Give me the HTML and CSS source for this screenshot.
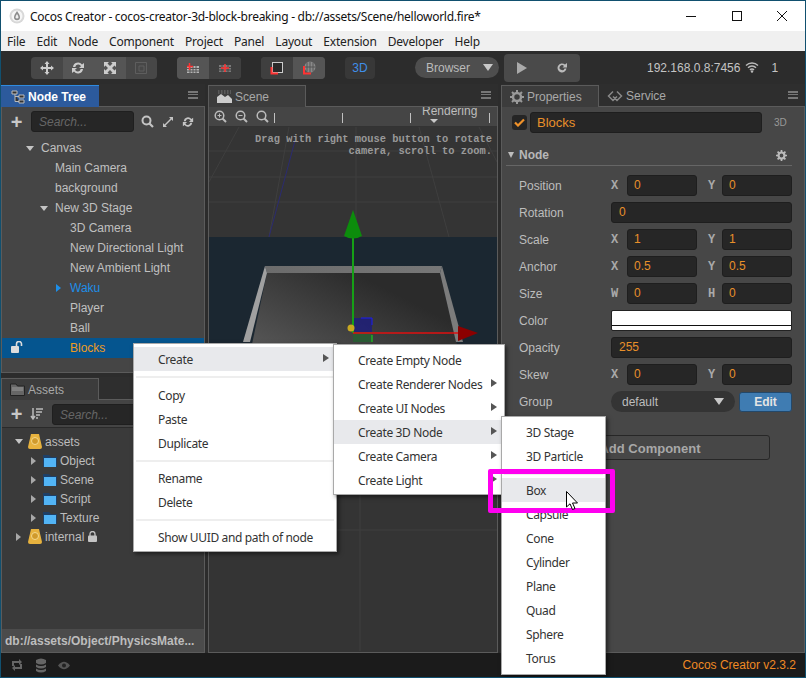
FILE: index.html
```html
<!DOCTYPE html>
<html lang="en">
<head>
<meta charset="utf-8">
<title>Cocos Creator</title>
<link rel="stylesheet" href="styles.css">
</head>
<body>
<div class="window">
  <header class="titlebar">
    <svg class="app-icon" width="16" height="16" viewBox="0 0 16 16"><circle cx="8" cy="8" r="7.5" fill="#d8d8d8"/><circle cx="8" cy="8" r="5.5" fill="#f6f6f6"/><path d="M8 3 C6 6 5 7.5 5 9.2 A3 3 0 0 0 11 9.2 C11 7.5 10 6 8 3Z" fill="#8c8c8c"/><path d="M8 6 C7 7.5 6.6 8.2 6.6 9.2 A1.4 1.4 0 0 0 9.4 9.2 C9.4 8.2 9 7.5 8 6Z" fill="#eee"/></svg>
    <span class="title-text">Cocos Creator - cocos-creator-3d-block-breaking - db://assets/Scene/helloworld.fire*</span>
    <div class="win-controls">
      <svg width="12" height="12" viewBox="0 0 12 12"><path d="M1 6.5H11" stroke="#111" fill="none"/></svg>
      <svg width="12" height="12" viewBox="0 0 12 12"><rect x="1.5" y="1.5" width="9" height="9" stroke="#111" fill="none"/></svg>
      <svg width="12" height="12" viewBox="0 0 12 12"><path d="M1 1L11 11M11 1L1 11" stroke="#111" fill="none"/></svg>
    </div>
  </header>
  <nav class="menubar">
    <span>File</span><span>Edit</span><span>Node</span><span>Component</span><span>Project</span><span>Panel</span><span>Layout</span><span>Extension</span><span>Developer</span><span>Help</span>
  </nav>
  <div class="toolbar">
    <div class="tgroup tg-main">
      <span class="tbtn"><svg width="14" height="14" viewBox="0 0 14 14"><path d="M7 0L9.5 3H8V6H11V4.5L14 7L11 9.5V8H8V11H9.5L7 14L4.5 11H6V8H3V9.5L0 7L3 4.5V6H6V3H4.5Z" fill="#ccc"/></svg></span>
      <span class="tbtn on"><svg width="14" height="14" viewBox="0 0 14 14"><path d="M2 6A5 5 0 0 1 11 3.5L13 2V7H8L10 5.2A3 3 0 0 0 4.3 6ZM12 8A5 5 0 0 1 3 10.5L1 12V7H6L4 8.8A3 3 0 0 0 9.7 8Z" fill="#ccc"/></svg></span>
      <span class="tbtn on"><svg width="14" height="14" viewBox="0 0 14 14"><path d="M1 1H6L4.5 2.5L7 5L9.5 2.5L8 1H13V6L11.5 4.5L9 7L11.5 9.5L13 8V13H8L9.5 11.5L7 9L4.5 11.5L6 13H1V8L2.5 9.5L5 7L2.5 4.5L1 6Z" fill="#ccc"/></svg></span>
      <span class="tbtn"><svg width="14" height="14" viewBox="0 0 14 14"><path d="M1.5 1.5H12.5V12.5H1.5ZM5 5H10V10H5Z" stroke="#5e5e5e" fill="none"/></svg></span>
    </div>
    <div class="tgroup tg-pair">
      <span class="tbtn on"><svg width="14" height="12" viewBox="0 0 14 12"><path d="M1 4H13V11H1Z" fill="#b5b5b5"/><path d="M1 6.5H13M1 9H13M4 4V11M7 4V11M10 4V11" stroke="#555"/><path d="M3.5 1V8M1 4.5H7" stroke="#f33" stroke-width="1.5"/></svg></span>
      <span class="tbtn dim"><svg width="14" height="12" viewBox="0 0 14 12"><path d="M1 3H13V10H1Z" fill="#7a7a7a"/><path d="M1 5.5H13M1 8H13M4 3V10M10 3V10" stroke="#444"/><path d="M7 2V10M3 6H11" stroke="#f33" stroke-width="1.5"/></svg></span>
    </div>
    <div class="tgroup tg-pair">
      <span class="tbtn dim"><svg width="14" height="14" viewBox="0 0 14 14"><rect x="2.500" y="1.500" width="10" height="10" fill="#2a2a2a" stroke="#ccc"/><path d="M1.500 6V12.500H8" stroke="#f33" stroke-width="2" fill="none"/></svg></span>
      <span class="tbtn on"><svg width="14" height="14" viewBox="0 0 14 14"><circle cx="8" cy="6" r="5.500" fill="#8a8a8a"/><path d="M2.500 6H13.500M8 .5V11.500M5 1.500V10.500M11 1.500V10.500" stroke="#555"/><path d="M2 5V12.500H9" stroke="#f33" stroke-width="2" fill="none"/></svg></span>
    </div>
    <div class="tgroup tg-3d">3D</div>
    <div class="browser-select"><span>Browser</span><i class="tri tri-down"></i></div>
    <div class="tgroup tg-play">
      <svg width="12" height="12" viewBox="0 0 12 12"><path d="M1 0L11 6L1 12Z" fill="#aaa"/></svg>
      <svg width="12" height="12" viewBox="0 0 12 12"><path d="M10.500 6.500A4.500 4.500 0 1 1 9 2.500L11 1V5.500H6.500L8 4A2.500 2.500 0 1 0 8.500 6.500Z" fill="#bbb"/></svg>
    </div>
    <div class="server">
      <span>192.168.0.8:7456</span>
      <svg width="14" height="11" viewBox="0 0 14 11"><path d="M1 3.500A8.500 8.500 0 0 1 13 3.500M3 5.800A5.500 5.500 0 0 1 11 5.800M5 8A2.500 2.500 0 0 1 9 8" stroke="#bbb" stroke-width="1.400" fill="none"/><circle cx="7" cy="9.500" r="1.200" fill="#bbb"/></svg>
      <span class="server-count">1</span>
    </div>
  </div>

  <main class="workspace">
    <div class="left-col">
      <section class="panel tree-panel">
        <div class="tabs">
          <div class="tab tab-blue"><svg width="14" height="14" viewBox="0 0 14 14"><path d="M1 1H6V4H1ZM8 5H13V8H8ZM8 10H13V13H8ZM4 4V11.500H8M4 6.500H8" fill="#333" stroke="#bbb"/></svg><span>Node Tree</span></div>
          <i class="burger"></i>
        </div>
        <div class="panel-body">
          <div class="side-tools">
            <span class="plus">+</span>
            <div class="search">Search...</div>
            <svg width="13" height="13" viewBox="0 0 13 13"><circle cx="5.500" cy="5.500" r="4" stroke="#c4c4c4" stroke-width="2" fill="none"/><path d="M8.500 8.500L12 12" stroke="#c4c4c4" stroke-width="2.200"/></svg>
            <svg width="12" height="12" viewBox="0 0 12 12"><path d="M7 1H11V5L9.500 3.500L3.500 9.500L5 11H1V7L2.500 8.500L8.500 2.500Z" fill="#c4c4c4"/></svg>
            <svg width="12" height="12" viewBox="0 0 14 14"><path d="M2 6A5 5 0 0 1 11 3.500L13 2V7H8L10 5.200A3 3 0 0 0 4.300 6ZM12 8A5 5 0 0 1 3 10.500L1 12V7H6L4 8.800A3 3 0 0 0 9.700 8Z" fill="#c4c4c4"/></svg>
          </div>
          <ul class="tree">
            <li class="l1"><i class="tri tri-tree"></i>Canvas</li>
            <li class="l2">Main Camera</li>
            <li class="l2">background</li>
            <li class="l2"><i class="tri tri-tree"></i>New 3D Stage</li>
            <li class="l3">3D Camera</li>
            <li class="l3">New Directional Light</li>
            <li class="l3">New Ambient Light</li>
            <li class="l3 blue"><i class="tri tri-right tri-blue"></i>Waku</li>
            <li class="l3">Player</li>
            <li class="l3">Ball</li>
            <li class="l3 selected"><svg class="unlock" width="13" height="12" viewBox="0 0 13 12"><rect x="0" y="5" width="8" height="7" rx="1" fill="#ddd"/><path d="M5.500 5V3A2.500 2.500 0 0 1 10.500 3V5" stroke="#ddd" stroke-width="1.600" fill="none"/></svg>Blocks</li>
          </ul>
        </div>
      </section>
      <section class="panel assets-panel">
        <div class="tabs">
          <div class="tab"><svg width="15" height="13" viewBox="0 0 15 13"><path d="M.5 1H6L7.500 3H14.500V12.500H.5Z" fill="#666" stroke="#222"/><path d="M2 5H13M2 7H13" stroke="#999"/></svg><span>Assets</span></div>
        </div>
        <div class="panel-body assets-body">
          <div class="side-tools assets-tools">
            <span class="plus">+</span>
            <svg width="13" height="14" viewBox="0 0 13 14"><path d="M3 1V11M1 9L3 12L5 9" stroke="#bbb" stroke-width="1.500" fill="none"/><path d="M6 2H13M6 5H12M6 8H10M6 11H8" stroke="#bbb" stroke-width="1.500"/></svg>
            <div class="search">Search...</div>
          </div>
          <ul class="assets">
            <li class="a1"><i class="tri tri-tree"></i><svg class="db" width="14" height="17" viewBox="0 0 14 17"><path d="M3 1H11L14 14Q14 16 12 16H2Q0 16 0 14Z" fill="#e7b23e"/><circle cx="7" cy="8" r="3.500" fill="#d09a2c" stroke="#f5d98c"/></svg>assets</li>
            <li class="a2"><i class="tri tri-right"></i><svg class="folder" width="14" height="12" viewBox="0 0 14 12"><path d="M0 0H6L8 2H14V12H0Z" fill="#1e3f66"/><path d="M1 3H13V12H1Z" fill="#52b4f5"/></svg>Object</li>
            <li class="a2"><i class="tri tri-right"></i><svg class="folder" width="14" height="12" viewBox="0 0 14 12"><path d="M0 0H6L8 2H14V12H0Z" fill="#1e3f66"/><path d="M1 3H13V12H1Z" fill="#52b4f5"/></svg>Scene</li>
            <li class="a2"><i class="tri tri-right"></i><svg class="folder" width="14" height="12" viewBox="0 0 14 12"><path d="M0 0H6L8 2H14V12H0Z" fill="#1e3f66"/><path d="M1 3H13V12H1Z" fill="#52b4f5"/></svg>Script</li>
            <li class="a2"><i class="tri tri-right"></i><svg class="folder" width="14" height="12" viewBox="0 0 14 12"><path d="M0 0H6L8 2H14V12H0Z" fill="#1e3f66"/><path d="M1 3H13V12H1Z" fill="#52b4f5"/></svg>Texture</li>
            <li class="a1"><i class="tri tri-right"></i><svg class="db" width="14" height="17" viewBox="0 0 14 17"><path d="M3 1H11L14 14Q14 16 12 16H2Q0 16 0 14Z" fill="#e7b23e"/><circle cx="7" cy="8" r="3.500" fill="#d09a2c" stroke="#f5d98c"/></svg>internal<svg class="lock" width="9" height="11" viewBox="0 0 9 11"><rect x="0" y="4.500" width="9" height="6.500" rx="1" fill="#c4c4c4"/><path d="M2 5V3A2.500 2.500 0 0 1 7 3V5" stroke="#c4c4c4" stroke-width="1.300" fill="none"/></svg></li>
          </ul>
          <div class="path-bar">db://assets/Object/PhysicsMate...</div>
        </div>
      </section>
    </div>

    <section class="panel scene-panel">
      <div class="tabs">
        <div class="tab"><svg width="15" height="14" viewBox="0 0 15 14"><path d="M0 13V7L4 4L8 7L11 5L15 9V13Z" fill="#ccc"/><path d="M1 1H14M1 3H14" stroke="#777" stroke-dasharray="1.500 1.500"/></svg><span>Scene</span></div>
        <i class="burger"></i>
      </div>
      <div class="panel-body scene-body">
        <div class="scene-tools">
          <svg width="13" height="13" viewBox="0 0 13 13"><circle cx="5.500" cy="5.500" r="4.300" stroke="#bbb" stroke-width="1.500" fill="none"/><path d="M8.500 8.500L12 12" stroke="#bbb" stroke-width="2"/><path d="M3.500 5.500H7.500M5.500 3.500V7.500" stroke="#bbb"/></svg>
          <svg width="13" height="13" viewBox="0 0 13 13"><circle cx="5.500" cy="5.500" r="4.300" stroke="#bbb" stroke-width="1.500" fill="none"/><path d="M8.500 8.500L12 12" stroke="#bbb" stroke-width="2"/><path d="M3.500 5.500H7.500" stroke="#bbb"/></svg>
          <svg width="13" height="13" viewBox="0 0 13 13"><circle cx="5.500" cy="5.500" r="4.300" stroke="#bbb" stroke-width="1.500" fill="none"/><path d="M8.500 8.500L12 12" stroke="#bbb" stroke-width="2"/></svg>
          <i class="vbar vbar-a"></i><i class="vbar vbar-b"></i><i class="vbar vbar-c"></i>
          <div class="rendering"><span>Rendering</span><i class="tri tri-render"></i></div>
          <i class="vbar vbar-d"></i>
        </div>
        <div class="canvas">
          <svg class="scene-svg" width="288" height="524" viewBox="0 0 288 524">
            <rect width="288" height="524" fill="#343434"/>
            <g stroke="#3f3f3f" fill="none">
              <path d="M0 24H288M0 50H288M0 75H288"/>
              <path d="M30 0L0 55M80 0L60 110M147 0V110M210 0L240 110M270 0L288 35"/>
              <path d="M0 403H288M151 360V524"/>
            </g>
            <rect y="110" width="288" height="220" fill="#1b2731"/>
            <path d="M87 10L60 110" stroke="#2b2b70"/>
            <defs>
              <linearGradient id="tray" x1="0" y1="1" x2="1" y2="0"><stop offset="0" stop-color="#666"/><stop offset=".75" stop-color="#2b2b2b"/></linearGradient>
              <linearGradient id="rim" x1="0" y1="0" x2="1" y2="0"><stop offset="0" stop-color="#6c6c6c"/><stop offset="1" stop-color="#777"/></linearGradient>
            </defs>
            <path d="M58 146H231L258 260H34Z" fill="url(#tray)"/>
            <path d="M56 139H233L231 146H58Z" fill="url(#rim)"/>
            <path d="M56 139L58 146L41 215L34 215Z" fill="#a0a0a0"/>
            <path d="M233 139L231 146L247 215L254 215Z" fill="#7c7c7c"/>
            <path d="M144 191H163V215H144Z" fill="#1f1f7a" opacity=".85"/>
            <path d="M144 205H163V215H144Z" fill="#2a5a34"/>
            <path d="M152 191H163V198" stroke="#1c1cf0" fill="none"/>
            <path d="M163 208V215" stroke="#19e019"/>
            <path d="M144 110V206" stroke="#16a016" stroke-width="2"/>
            <path d="M144 83L153 109Q144 114 135 109Z" fill="#0c8c0c"/>
            <path d="M144 206H250" stroke="#e01010" stroke-width="1.500"/>
            <path d="M249 199L269 206L249 214Z" fill="#8c0000"/>
            <circle cx="142" cy="201" r="3.500" fill="#c8a820"/>
          </svg>
          <div class="scene-hint">Drag with right mouse button to rotate<br>camera, scroll to zoom.</div>
        </div>
      </div>
    </section>

    <section class="panel props-panel">
      <div class="tabs">
        <div class="tab"><svg width="14" height="14" viewBox="0 0 14 14"><circle cx="7" cy="7" r="4" stroke="#999" stroke-width="2.500" fill="none"/><path d="M7 0V3M7 11V14M0 7H3M11 7H14M2 2L4 4M10 10L12 12M12 2L10 4M4 10L2 12" stroke="#999" stroke-width="2"/></svg><span>Properties</span></div>
        <div class="tab-plain"><svg width="16" height="12" viewBox="0 0 16 12"><path d="M6 1.500L1.500 6L6 10.500L10 6.500M10 1.500L14.500 6L10 10.500L6 6.500" stroke="#888" stroke-width="1.500" fill="none"/></svg><span>Service</span></div>
        <i class="burger"></i>
      </div>
      <div class="panel-body props-body">
        <div class="name-row">
          <span class="check"><svg width="11" height="9" viewBox="0 0 11 9"><path d="M1 4.500L4 7.500L10 1.500" stroke="#f0922a" stroke-width="2.200" fill="none"/></svg></span>
          <div class="input name-input">Blocks</div>
          <span class="badge-3d">3D</span>
        </div>
        <div class="node-head">
          <i class="tri tri-node"></i><span>Node</span>
          <svg width="11" height="11" viewBox="0 0 14 14"><circle cx="7" cy="7" r="3.800" stroke="#bbb" stroke-width="2.800" fill="none"/><path d="M7 0V3M7 11V14M0 7H3M11 7H14M2 2L4 4M10 10L12 12M12 2L10 4M4 10L2 12" stroke="#bbb" stroke-width="2.200"/></svg>
        </div>
        <div class="props-list">
          <div class="prop"><label>Position</label><b>X</b><div class="input xy">0</div><b class="second">Y</b><div class="input xy">0</div></div>
          <div class="prop"><label>Rotation</label><div class="input wide">0</div></div>
          <div class="prop"><label>Scale</label><b>X</b><div class="input xy">1</div><b class="second">Y</b><div class="input xy">1</div></div>
          <div class="prop"><label>Anchor</label><b>X</b><div class="input xy">0.5</div><b class="second">Y</b><div class="input xy">0.5</div></div>
          <div class="prop"><label>Size</label><b>W</b><div class="input xy">0</div><b class="second">H</b><div class="input xy">0</div></div>
          <div class="prop"><label>Color</label><div class="swatch"></div></div>
          <div class="prop"><label>Opacity</label><div class="input wide">255</div></div>
          <div class="prop"><label>Skew</label><b>X</b><div class="input xy">0</div><b class="second">Y</b><div class="input xy">0</div></div>
          <div class="prop"><label>Group</label><div class="group-select"><span>default</span><i class="tri tri-down"></i></div><div class="edit-btn">Edit</div></div>
        </div>
        <div class="add-comp">Add Component</div>
      </div>
    </section>
  </main>

  <footer class="statusbar">
    <svg width="12" height="12" viewBox="0 0 12 12"><path d="M1 7V2H8V0L11 3L8 6V4H3V7ZM11 5V10H4V12L1 9L4 6V8H9V5Z" fill="#666"/></svg>
    <svg width="10" height="15" viewBox="0 0 10 15"><path d="M0 2Q5 -1 10 2V5Q5 8 0 5ZM0 6.500Q5 9.500 10 6.500V9Q5 12 0 9ZM0 10.500Q5 13.500 10 10.500V13Q5 16 0 13Z" fill="#666"/></svg>
    <svg width="12" height="11" viewBox="0 0 12 11"><path d="M0 5.500Q6 -2 12 5.500Q6 13 0 5.500Z" fill="#555"/><circle cx="6" cy="5.500" r="2" fill="#222"/></svg>
    <span class="version">Cocos Creator v2.3.2</span>
  </footer>

  <div class="menu menu-main">
    <div class="item hl">Create<i class="tri tri-menu"></i></div>
    <div class="sep sep-wide"></div>
    <div class="item">Copy</div>
    <div class="item">Paste</div>
    <div class="item">Duplicate</div>
    <div class="sep"></div>
    <div class="item">Rename</div>
    <div class="item">Delete</div>
    <div class="sep"></div>
    <div class="item">Show UUID and path of node</div>
  </div>
  <div class="menu menu-sub">
    <div class="item">Create Empty Node</div>
    <div class="item">Create Renderer Nodes<i class="tri tri-menu"></i></div>
    <div class="item">Create UI Nodes<i class="tri tri-menu"></i></div>
    <div class="item hl">Create 3D Node<i class="tri tri-menu"></i></div>
    <div class="item">Create Camera<i class="tri tri-menu"></i></div>
    <div class="item">Create Light<i class="tri tri-menu"></i></div>
  </div>
  <div class="menu menu-3d">
    <div class="item">3D Stage</div>
    <div class="item">3D Particle</div>
    <div class="sep sep-thin"></div>
    <div class="item hl">Box</div>
    <div class="item">Capsule</div>
    <div class="item">Cone</div>
    <div class="item">Cylinder</div>
    <div class="item">Plane</div>
    <div class="item">Quad</div>
    <div class="item">Sphere</div>
    <div class="item">Torus</div>
  </div>
  <div class="highlight-box"></div>
  <svg class="cursor" width="13" height="20" viewBox="0 0 13 20"><path d="M.5 .5V16L4 12.800L6.500 18.500L9 17.500L6.500 12H11.500Z" fill="#fff" stroke="#000"/></svg>
</div>
</body>
</html>
```
FILE: styles.css
```css
* { box-sizing: border-box; }
html, body { margin: 0; padding: 0; }
body { width: 806px; height: 678px; overflow: hidden; background: #1a1a1a; font-family: "Liberation Sans", Arial, sans-serif; font-size: 12px; color: #bdbdbd; }
ul { list-style: none; margin: 0; padding: 0; }
i { display: block; font-style: normal; }

.window { position: relative; width: 806px; height: 678px; border: 1px solid #11506f; display: flex; flex-direction: column; overflow: hidden; background: #2b2b2b; }

.titlebar { flex: 0 0 30px; background: #fff; display: flex; align-items: center; padding-left: 8px; font-family: "Noto Sans", sans-serif; font-size: 12px; color: #111; }
.app-icon { margin-right: 5px; }
.title-text { letter-spacing: -.27px; white-space: nowrap; }
.win-controls { margin-left: auto; display: flex; gap: 33.500px; padding-right: 17px; }

.menubar { flex: 0 0 20px; background: #f0f0f0; display: flex; align-items: center; padding-left: 6px; gap: 11.100px; font-family: "Noto Sans", sans-serif; font-size: 12px; color: #222; letter-spacing: -.2px; }

.toolbar { flex: 0 0 33px; background: #2c2c2c; display: flex; align-items: center; padding-left: 30px; color: #bbb; }
.tgroup { display: flex; align-items: center; border-radius: 4px; overflow: hidden; background: #474747; }
.tbtn { height: 22px; width: 32px; display: flex; align-items: center; justify-content: center; }
.tbtn.on { background: #555; }
.tbtn.dim { background: #3f3f3f; }
.tg-main { height: 22px; margin-right: 20px; }
.tg-main .tbtn { width: 31.500px; }
.tg-pair { height: 22px; margin-right: 20px; }
.tg-3d { width: 30px; height: 22px; background: #383838; justify-content: center; color: #3f8fea; font-size: 12px; margin-right: 40px; }
.browser-select { width: 84px; height: 21px; border-radius: 11px; background: #4e4e4e; display: flex; align-items: center; padding-left: 11px; gap: 13px; margin-right: 5px; font-size: 12px; color: #bbb; }
.tg-play { width: 76px; height: 28px; justify-content: space-between; background: #4a4a4a; padding: 0 12px; }
.server { margin-left: 67px; display: flex; align-items: center; gap: 5px; font-size: 12px; color: #c4c4c4; }
.server-count { margin-left: 7px; }

.tri { width: 0; height: 0; border-style: solid; border-color: transparent; }
.tri-down { border-width: 7px 5px 0; border-top-color: #c8c8c8; }

.workspace { flex: 1; display: grid; grid-template-columns: 204px 290px 304px; column-gap: 3px; min-height: 0; background: #2c2c2c; }
.left-col { display: flex; flex-direction: column; gap: 4px; min-height: 0; }
.panel { display: flex; flex-direction: column; min-height: 0; }
.tree-panel { flex: 0 0 289px; }
.assets-panel { flex: 1; min-height: 0; }
.tabs { flex: 0 0 23px; display: flex; align-items: flex-end; position: relative; background: #2e2e2e; border-bottom: 1px solid #5b5b5b; }
.assets-panel .tabs { border-top: 1px solid transparent; }
.tab { width: 98px; height: 22px; display: flex; align-items: center; gap: 3px; padding-left: 8px; background: #3c3c3c; border: 1px solid #5b5b5b; border-bottom: 0; margin-bottom: -1px; color: #a8a8a8; font-size: 12px; }
.tab-blue { background: #2c5a9c; border: 0; border-top: 1px solid #2f8be0; color: #fff; font-weight: 700; padding-left: 10px; }
.tab-plain { display: flex; align-items: center; gap: 3px; height: 22px; padding: 1px 0 0 8px; color: #a8a8a8; font-size: 12px; }
.burger { width: 10px; height: 8px; margin: 0 7px 7px auto; border-top: 2px solid #777; border-bottom: 2px solid #777; position: relative; }
.burger::after { content: ""; position: absolute; left: 0; right: 0; top: 1px; height: 1px; background: #777; }

.panel-body { flex: 1; min-height: 0; border: 1px solid #5b5b5b; border-top: 0; background: #454545; display: flex; flex-direction: column; }

.side-tools { height: 29px; flex: 0 0 29px; display: flex; align-items: center; padding-left: 8px; gap: 8px; }
.plus { width: 13px; color: #c8c8c8; font-size: 20px; font-weight: 700; line-height: 20px; text-align: center; }
.search { width: 103px; height: 21px; border-radius: 3px; background: #262626; border: 1px solid #1f1f1f; color: #666; font-style: italic; padding: 4px 7px 2px; margin-right: -1px; line-height: 13px; }

.tree { color: #c0c0c0; padding-top: 2px; }
.tree li { height: 20px; line-height: 20px; position: relative; white-space: nowrap; }
.tree .l1 { padding-left: 39px; }
.tree .l2 { padding-left: 53px; }
.tree .l3 { padding-left: 68px; }
.tree li .tri, .assets li > .tri { position: absolute; }
.tri-tree { border-width: 5px 4px 0; border-top-color: #c4c4c4; top: 8px; margin-left: -15px; }
.assets .tri-tree { margin-left: 0; left: 13px; top: 7px; }
.tri-right { border-width: 4px 0 4px 5px; border-left-color: #a8a8a8; top: 6px; }
.tree .tri-right { margin-left: -14px; }
.tri-blue { border-left-color: #1d8ee8; }
.tree .blue { color: #1d8ee8; }
.tree .selected { background: #05558f; color: #ef9b1f; }
.unlock { position: absolute; left: 9px; top: 3px; }

.assets-body { background: #3a3a3a; }
.assets-tools { background: #444; border-bottom: 1px solid #2a2a2a; gap: 7px; flex: 0 0 28px; }
.assets-tools .search { width: 130px; margin: 1px 0 0 2px; }
.assets { flex: 1; padding-top: 4px; color: #bdbdbd; }
.assets li { height: 19px; display: flex; align-items: center; position: relative; white-space: nowrap; }
.assets .a1 { padding-left: 26px; }
.assets .a2 { padding-left: 41px; }
.assets .a1 > .tri-right { left: 14px; top: 6px; }
.assets .a2 > .tri-right { left: 29px; top: 6px; }
.db { margin-right: 3px; }
.folder { margin-right: 3px; }
.lock { margin-left: 4px; }
.path-bar { flex: 0 0 23px; background: #4b4b4b; color: #bdbdbd; font-weight: 700; line-height: 22px; padding: 1px 0 0 3px; white-space: nowrap; overflow: hidden; }

.scene-body { background: #343434; }
.scene-tools { flex: 0 0 20px; background: #454545; border-bottom: 1px solid #333; display: flex; align-items: center; padding-left: 5px; gap: 8px; position: relative; overflow: hidden; }
.vbar { width: 1px; height: 10px; background: #c0c0c0; position: absolute; top: 6px; }
.vbar-a { left: 65px; }
.vbar-b { left: 133px; }
.vbar-c { left: 201px; }
.vbar-d { left: 280px; }
.rendering { position: absolute; left: 213px; top: -3px; color: #bdbdbd; font-size: 12px; line-height: 14px; }
.tri-render { border-width: 4px 4px 0; border-top-color: #c8c8c8; position: absolute; left: 8px; top: 15px; }
.canvas { flex: 1; position: relative; overflow: hidden; min-height: 0; }
.scene-svg { display: block; }
.scene-hint { position: absolute; top: 6px; right: 5px; text-align: right; font-family: "Liberation Mono", monospace; font-size: 10.400px; line-height: 12px; color: #999; font-weight: 700; white-space: nowrap; }

.props-body { background: #474747; padding-left: 3px; padding-right: 12px; }
.name-row { display: flex; align-items: center; height: 26px; padding-top: 5px; padding-left: 7px; flex: 0 0 26px; }
.check { width: 15px; height: 15px; border-radius: 3px; background: #252525; display: flex; align-items: center; justify-content: center; margin-right: 3px; }
.input { height: 21px; border-radius: 3px; background: #262626; border: 1px solid #1e1e1e; color: #e8902a; font-size: 12px; line-height: 19px; }
.name-input { width: 232px; padding-left: 6px; font-size: 13px; }
.badge-3d { margin-left: 12px; font-size: 10px; color: #999; }
.node-head { flex: 0 0 33px; display: flex; align-items: center; border-bottom: 1px solid #666; margin-left: 1px; padding-top: 12px; font-weight: 700; color: #b8b8b8; font-size: 12px; }
.tri-node { border-width: 6px 3.500px 0; border-top-color: #bdbdbd; margin: 0 5px 0 2px; }
.node-head svg { margin-left: auto; margin-right: 5px; }
.props-list { margin-top: 6px; }
.prop { height: 27px; display: flex; align-items: center; padding-left: 14px; position: relative; }
.prop label { flex: 0 0 92px; color: #bdbdbd; }
.prop b { flex: 0 0 16px; font-family: "Liberation Mono", monospace; font-size: 12px; color: #aaa; font-weight: 700; }
.prop b.second { flex: 0 0 14px; margin-left: 11px; }
.input.xy { width: 70px; padding-left: 6px; }
.input.wide { width: 182px; padding-left: 7px; }
.swatch { width: 182px; height: 21px; background: linear-gradient(#fff 14px, #111 14px, #111 15px, #fff 15px); border: 1px solid #222; border-radius: 2px; }
.group-select { width: 124px; height: 21px; border-radius: 11px; background: #343434; display: flex; align-items: center; justify-content: space-between; padding: 0 11px; color: #bdbdbd; margin-right: 4px; }
.edit-btn { width: 53px; height: 20px; background: #3f7cb2; border: 1px solid #23486a; border-radius: 3px; color: #e4e4e4; text-align: center; line-height: 18px; font-weight: 700; font-size: 12px; }
.add-comp { margin: 20px 0 0 25px; width: 240px; height: 25px; background: #474747; border: 1px solid #272727; border-radius: 3px; text-align: center; line-height: 25px; font-weight: 700; color: #a8a8a8; font-size: 13px; }

.statusbar { flex: 0 0 24px; background: #1b1b1b; display: flex; align-items: center; padding-left: 10px; gap: 12.500px; }
.version { margin-left: auto; padding-right: 9px; color: #ef8a24; font-size: 12px; }

.menu { position: absolute; background: #fff; border: 1px solid #a9a9a9; box-shadow: 2px 2px 4px rgba(0,0,0,.5); font-family: "Noto Sans", sans-serif; font-size: 12px; color: #333; padding: 3px 0 2px; letter-spacing: -.35px; }
.menu-main { left: 132px; top: 342px; width: 204px; }
.menu-sub { left: 332px; top: 343px; width: 172px; }
.menu-3d { left: 500px; top: 415px; width: 105px; height: 259px; }
.item { height: 24px; line-height: 26px; padding-left: 24px; position: relative; white-space: nowrap; }
.item.hl { background: #e8e9ec; }
.sep { height: 11px; padding-top: 5px; }
.sep::after { content: ""; display: block; height: 2px; margin: 0 2px; background: #eee; }
.sep-wide { height: 12px; }
.sep-thin { height: 10px; }
.tri-menu { position: absolute; right: 7px; top: 7px; border-width: 4.500px 0 4.500px 6px; border-left-color: #555; }
.highlight-box { position: absolute; left: 487px; top: 468px; width: 127px; height: 44px; border: 5px solid #ff00f0; border-radius: 2px; }
.cursor { position: absolute; left: 565px; top: 490px; }
```
